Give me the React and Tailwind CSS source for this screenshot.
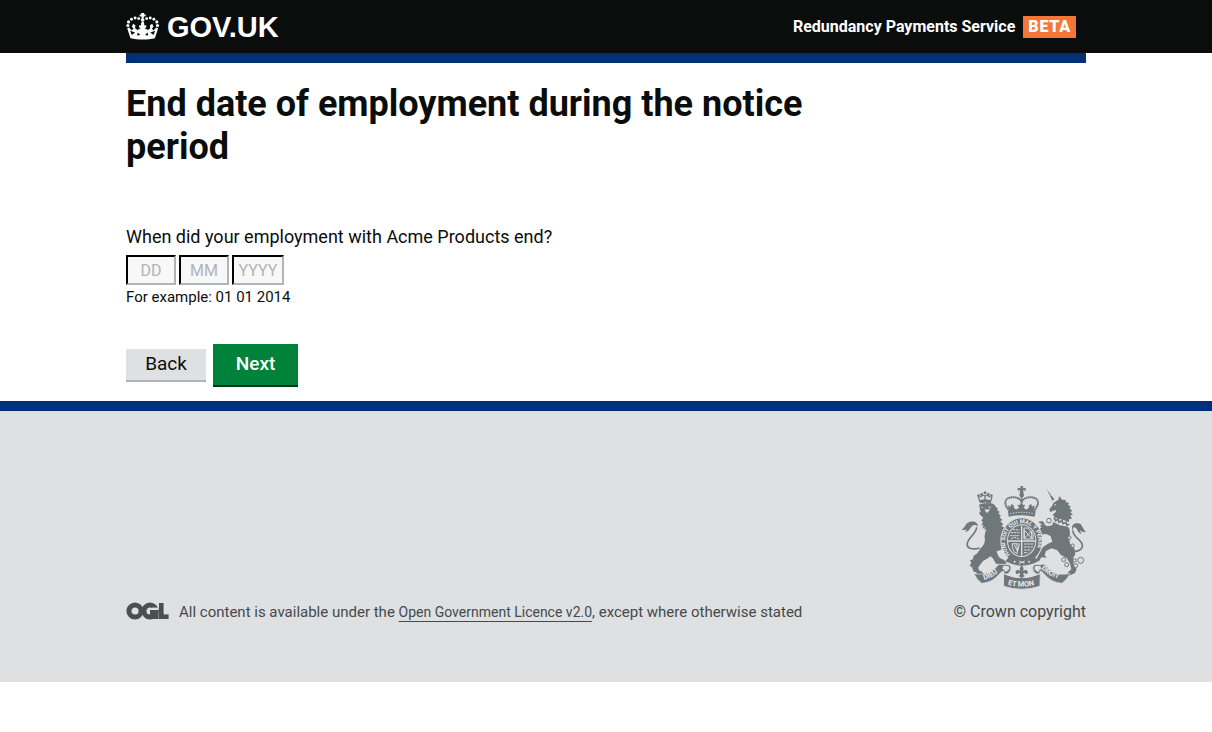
import React from 'react';

function CrownLogo() {
  return (
    <svg viewBox="20 38 102 82" className="h-[27px] w-[34px] shrink-0" fill="#fff" aria-hidden="true">
      <circle cx="70" cy="59" r="5.5" />
      <path d="M67 53l-1-5-5 1v-7l5 1-1-5h10l-1 5 5-1v7l-5-1-1 5z" />
      <circle cx="58" cy="55" r="4.4" />
      <circle cx="47" cy="53" r="4.4" />
      <circle cx="36" cy="57" r="4.4" />
      <circle cx="27" cy="65" r="4.8" />
      <circle cx="25" cy="76" r="4.8" />
      <circle cx="82" cy="55" r="4.4" />
      <circle cx="93" cy="53" r="4.4" />
      <circle cx="104" cy="57" r="4.4" />
      <circle cx="113" cy="65" r="4.8" />
      <circle cx="115" cy="76" r="4.8" />
      <circle cx="70" cy="69" r="4.5" />
      <path d="M23 84l6-2 8 9 5-6-5-5 4-9 7 4-1 9 7 6 10-6-5-3v-6l5 1 2-5h8l2 5 5-1v6l-5 3 10 6 7-6-1-9 7-4 4 9-5 5 5 6 8-9 6 2-10 31c-21 5-53 5-74 0z" />
      <path d="M32 92l5 13 10-8zM108 92l-5 13-10-8zM55 97l8 8-10 1zM85 97l-8 8 10 1z" fill="#0b0c0c" />
    </svg>
  );
}

function OglLogo() {
  return (
    <svg viewBox="0 0 43 18" className="h-[18px] w-[43px] shrink-0" role="img" aria-label="OGL">
      <circle cx="9" cy="9" r="6.1" fill="none" stroke="#4a4f50" strokeWidth="5" />
      <circle cx="24" cy="9" r="6.1" fill="none" stroke="#4a4f50" strokeWidth="5" />
      <rect x="26" y="5.6" width="6" height="2.6" fill="#dee0e2" />
      <rect x="24" y="8" width="8.6" height="9" fill="#4a4f50" />
      <rect x="33" y="1" width="4.6" height="16" fill="#4a4f50" />
      <rect x="33" y="12.4" width="9.6" height="4.6" fill="#4a4f50" />
    </svg>
  );
}

function RoyalArms() {
  return (
    <svg viewBox="33 18 375 312" className="h-[104px] w-[125px]" fill="#6f777b" role="img" aria-label="Royal coat of arms">
      <defs>
        <path id="garter-band" d="M180 224A50 55 0 1 1 251 224" />
        <path id="scroll-left" d="M103 300Q130 293 154 268" />
        <path id="scroll-middle" d="M173 314Q215 326 259 314" />
        <path id="scroll-right" d="M273 266Q300 292 337 299" />
      </defs>

      {/* Lion */}
      <path d="M90 66l-5-17" fill="none" stroke="#6f777b" strokeWidth="4" />
      <path d="M91 67q15-6 30 0l5-17M91 52q5-9 14-4 8-5 15 4M105 48v15" fill="none" stroke="#6f777b" strokeWidth="4" />
      <g>
        <circle cx="86" cy="47" r="4" />
        <circle cx="95" cy="43" r="4" />
        <circle cx="105" cy="38" r="4.5" />
        <circle cx="115" cy="43" r="4" />
        <circle cx="124" cy="47" r="4" />
        <path d="M90 61q15-7 31 0l1 9q-16-5-31 0z" />
      </g>
      <path d="M87 74q15-7 35-4 11 1 15 10l7 6-3 4 8 6-4 4 8 8-5 3 9 9-6 4 9 9-6 5 11 5 7-1-2 11-6 4 5 9-7 6 4 8-8 5 1 11-6 14q-15 2-25 12-8 7-14 13l-14 7-8 10-7 10 1 8 10 5 6 8-9 5-11-3-3-8-8-2-5-13-7-5 5-8-4-8 9-3 1-9 12-9 8-12 12-15 3-13q-4-19 5-33l-7 3 2-9-8 5 4-11-7 2 5-12-5-2 5-10-3-7 3-6-7-4z" />
      <path d="M90 79l10 1 2 5-9 3-4 7 12 1 7 5-8 4 4 9-9-5-7-7 2-12z" />
      <path d="M92 80l8 1-4 3zM113 80l12 0-5 4zM104 86l8 3 8-3-3 7-5 6-5-4z" fill="#dee0e2" />
      <path d="M119 200l19 4q3 23 13 31l10 4 9 9-5 5-15-1-12-1-10-17-17-13z" />
      <path d="M89 204C65 211 49 204 52 190c3-18 28-30 28-48" fill="none" stroke="#6f777b" strokeWidth="5" />
      <path d="M83 140c2-14-13-18-25-14-13 4-13 20-24 22 7 4 13 2 16-2-1 5-3 7-6 9 16 2 15-16 28-20 5-1 8 1 11 5z" />

      {/* Unicorn */}
      <path d="M290 27l23 31-6 4z" />
      <path d="M293 35l12 3m-8 7l12 2" fill="none" stroke="#dee0e2" strokeWidth="1.5" />
      <path d="M298 88l8-10 4-9 15-10 3-11 8 11 12 1-2 5 11 4-3 5 9 6-5 4 9 9-6 3 8 9-8 1 5 11-8-1-2 11-9-5-31-9-8-9 9-8 2-6-12 3-6 4z" />
      <path d="M312 74l7-3-3 6z" fill="#dee0e2" />
      <path d="M312 112l5 10 7-5 3 10 9-5 3 9 9-4 2 8 8-2" fill="none" stroke="#6f777b" strokeWidth="5" />
      <path d="M310 126l19 10 25 4q8 10 5 27-2 15 1 24l13 14 3 18-7 11 2 21 9 12-5 12-18 8-4-9 11-10-4-17-9-16-18-10-12-15-17-5-17 9-3 12 6 7-16-1-7 12-9-3 8-18 12-21 16-11 13-6-5-16-11-6-12-1-6 7-7 0-3-12 9-14 17-1 13 5z" />
      <path d="M270 137l9-7 12 9 18-3 5 12-16 5-12-4-3 12-12 6-7-6 10-6 2-10z" />
      <path d="M274 132l-10-6 13-3 8 8zM268 150l-8 0 7-9z" />
      <circle cx="297" cy="122" r="7" fill="#dee0e2" stroke="#6f777b" strokeWidth="3" />
      <path d="M364 213c18 4 35-4 33-19-3-15-29-23-28-42" fill="none" stroke="#6f777b" strokeWidth="5" />
      <path d="M367 154c-4-19 4-25 16-24 14-1 12 15 25 26-9 1-14-1-18-5 0 5 3 8 6 11-15-2-13-17-22-20-4-1-6 4-7 12z" />
      <g fill="#dee0e2" stroke="#6f777b" strokeWidth="3">
        <circle cx="358" cy="173" r="5" />
        <circle cx="368" cy="197" r="5" />
        <circle cx="341" cy="239" r="6" />
        <circle cx="350" cy="254" r="6" />
        <circle cx="377" cy="257" r="6" />
        <circle cx="374" cy="241" r="5" />
        <circle cx="392" cy="241" r="9" />
      </g>

      {/* Crown */}
      <path d="M211 18h9l-2 7 9-2v9l-8-2 2 10h-12l2-10-8 2v-9l9 2z" />
      <circle cx="215" cy="45" r="7" />
      <path d="M180 94c-17-17-18-33-6-39 16-7 32-3 41 9 9-12 25-16 41-9 12 6 11 22-6 39" fill="none" stroke="#6f777b" strokeWidth="6" strokeDasharray="5 1" />
      <path d="M215 51v38" fill="none" stroke="#6f777b" strokeWidth="6" strokeDasharray="4 1" />
      <path d="M176 89l-2-13 8 4 2-8 7 4 1 8 7 5 8-6-5-9 8 1 4-8 4 8 8-1-5 9 8 6 7-5 1-8 7-4 2 8 8-4-2 13-6 9h-67z" />
      <path d="M174 93q41-11 83 0l-3 17q-39-9-78 0z" />
      <path d="M181 101q34-8 69 0" fill="none" stroke="#dee0e2" strokeWidth="3" strokeDasharray="4 4" />

      {/* Garter and shield */}
      <ellipse cx="215" cy="182" rx="64" ry="70" fill="#dee0e2" />
      <ellipse cx="215" cy="182" rx="61" ry="67" />
      <ellipse cx="215" cy="182" rx="44" ry="49" fill="#dee0e2" />
      <ellipse cx="215" cy="182" rx="41" ry="46" />
      <text fill="#eceeef" fontFamily="Roboto, sans-serif" fontWeight="700" fontSize="17">
        <textPath href="#garter-band">HONI SOIT QUI MAL Y PENSE</textPath>
      </text>
      <path d="M215 137v90M174 183h82" fill="none" stroke="#dee0e2" strokeWidth="4" />
      <g fill="none" stroke="#dee0e2" strokeWidth="3">
        <path d="M183 158h27M181 167h28M189 149l20 1M183 176l9-4 16 4" strokeDasharray="7 2" />
        <path d="M223 150l22 25V153l-22 22zM222 144h12l15 19v14h-27z" />
        <path d="M187 191v11q2 14 14 19l7-29zM193 194l10 22M200 193l3 17" />
        <path d="M222 192h28M222 201h27M222 210h22M222 218h12" strokeDasharray="8 2" />
      </g>
      <path d="M176 232q39 26 79 0l10 12q-49 26-99 0z" />
      <circle cx="194" cy="245" r="3" fill="#dee0e2" />
      <circle cx="237" cy="245" r="3" fill="#dee0e2" />
      <path d="M207 243l17 7m-17 1l17-8" fill="none" stroke="#dee0e2" strokeWidth="3" />

      {/* Motto scroll */}
      <path d="M72 281l19 2q31 1 56-30l31 1q8 7 3 19-8 12-19 10l-1-10q-6 1-12 8-22 27-54 29-15-11-23-29z" stroke="#dee0e2" strokeWidth="2" />
      <path d="M360 281l-20 2q-31 1-56-30l-31 1q-8 7-3 19 8 12 19 10l1-10q6 1 12 8 22 27 54 29 15-11 24-29z" stroke="#dee0e2" strokeWidth="2" />
      <path d="M160 257l15 1q5 7 0 12-6 6-10 5-2-9-8-8zM271 257l-15 1q-5 7 0 12 6 6 10 5 2-9 8-8z" fill="#dee0e2" />
      <path d="M160 281q55 24 111 0l-1 38q-54 18-109 0z" stroke="#dee0e2" strokeWidth="3" />
      <path d="M193 258q22 8 44 0l8 32q-30 8-60 0z" fill="#dee0e2" />
      <path d="M215 256q9 9 4 18 9-8 14 0 2 8-7 9 1-5-5-4l-1 5 4 4-9 7-9-7 4-4-1-5q-6-1-5 4-9-1-7-9 5-8 14 0-5-9 4-18z" />
      <g fill="#eceeef" fontFamily="Roboto, sans-serif" fontWeight="700" fontSize="22">
        <text><textPath href="#scroll-left">DIEU</textPath></text>
        <text><textPath href="#scroll-middle">ET MON</textPath></text>
        <text fontSize="21"><textPath href="#scroll-right">DROIT</textPath></text>
      </g>
    </svg>
  );
}

const dateInput =
  'h-[30px] border-2 border-t-black border-l-black border-r-[#b1b4b6] border-b-[#b1b4b6] bg-[#f8f8f8] text-center text-base text-[#0b0c0c] placeholder:text-[#b1b4b6]';

export default function App() {
  return (
    <div className="bg-white font-[Roboto,'Liberation_Sans',sans-serif] text-[#0b0c0c]">
      <header className="bg-[#0b0c0c] text-white">
        <div className="mx-auto flex h-[53px] max-w-[960px] items-center justify-between pr-[10px]">
          <a href="#home" className="flex items-center gap-[7px]">
            <CrownLogo />
            <span className="font-['Liberation_Sans',sans-serif] text-[29px] leading-[34px] font-bold">GOV.UK</span>
          </a>
          <div className="flex items-center gap-2 font-bold">
            <span className="text-base">Redundancy Payments Service</span>
            <strong className="bg-[#f47738] px-[5px] text-base leading-[22px] tracking-wider">BETA</strong>
          </div>
        </div>
      </header>

      <main className="mx-auto max-w-[960px] border-t-[10px] border-[#003078] pt-5 pb-[14px]">
        <h1 className="max-w-[720px] text-[36px] leading-[43px] font-bold">
          End date of employment during the notice period
        </h1>
        <form onSubmit={(e) => e.preventDefault()}>
          <fieldset className="mt-14">
            <legend className="text-[18px] leading-6">When did your employment with Acme Products end?</legend>
            <div className="mt-[6px] flex gap-[3px]">
              <input aria-label="Day" placeholder="DD" inputMode="numeric" className={`${dateInput} w-[50px]`} />
              <input aria-label="Month" placeholder="MM" inputMode="numeric" className={`${dateInput} w-[50px]`} />
              <input aria-label="Year" placeholder="YYYY" inputMode="numeric" className={`${dateInput} w-[52px]`} />
            </div>
            <p className="mt-[2px] text-[15px] leading-5">For example: 01 01 2014</p>
          </fieldset>
          <div className="mt-[37px] flex items-center gap-[7px] text-[19px]">
            <button type="button" className="h-[33px] w-20 border-b-2 border-[#b1b4b6] bg-[#dee0e2]">Back</button>
            <button type="submit" className="h-[43px] w-[85px] border-b-2 border-[#003618] bg-[#00823b] font-medium text-white">Next</button>
          </div>
        </form>
      </main>

      <footer className="border-t-[10px] border-[#003078] bg-[#dee0e2] pt-[75px] pb-[60px] text-[#454a4c]">
        <div className="mx-auto flex max-w-[960px] items-end justify-between">
          <div className="flex items-start gap-[10px] text-[15px] leading-5">
            <OglLogo />
            <p>
              All content is available under the{' '}
              <a href="#licence" className="text-sm underline underline-offset-4">Open Government Licence v2.0</a>, except where otherwise stated
            </p>
          </div>
          <a href="#copyright" className="flex flex-col items-end gap-3 text-base leading-5">
            <RoyalArms />
            <span>© Crown copyright</span>
          </a>
        </div>
      </footer>
    </div>
  );
}
